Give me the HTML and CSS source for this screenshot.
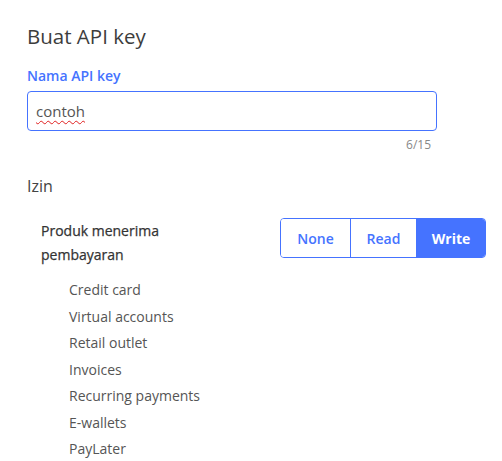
FILE: index.html
```html
<!DOCTYPE html>
<html lang="id">
<head>
<meta charset="utf-8">
<title>Buat API key</title>
<link rel="stylesheet" href="styles.css">
</head>
<body>
<div class="panel">
  <h1 class="title">Buat API key</h1>
  <label class="field-label">Nama API key</label>
  <div class="input" role="textbox"><span class="misspelled">contoh</span></div>
  <div class="counter">6/15</div>
  <h2 class="section">Izin</h2>
  <div class="perm-row">
    <div class="perm-name">Produk menerima<br>pembayaran</div>
    <div class="seg">
      <button class="seg-btn">None</button>
      <button class="seg-btn">Read</button>
      <button class="seg-btn active">Write</button>
    </div>
  </div>
  <ul class="products">
    <li>Credit card</li>
    <li>Virtual accounts</li>
    <li>Retail outlet</li>
    <li>Invoices</li>
    <li>Recurring payments</li>
    <li>E-wallets</li>
    <li>PayLater</li>
  </ul>
</div>
</body>
</html>
```
FILE: styles.css
```css
* { box-sizing: border-box; }
body {
  margin: 0;
  background: #fff;
  font-family: "Open Sans", "Noto Sans", sans-serif;
  color: #555;
}
.panel {
  padding: 22px 16px 0 27px;
}
.title {
  margin: 0;
  font-size: 20.5px;
  line-height: 28px;
  font-weight: 400;
  color: #3d3d3d;
}
.field-label {
  display: block;
  margin-top: 16px;
  font-size: 14px;
  line-height: 20px;
  font-weight: 600;
  color: #4573ff;
}
.input {
  margin-top: 5px;
  width: 410px;
  height: 40px;
  border: 1px solid #4573ff;
  border-radius: 4px;
  padding: 0 8px;
  display: flex;
  align-items: center;
  font-size: 15px;
  color: #555;
}
.misspelled {
  text-decoration: underline wavy #e02020;
  text-decoration-thickness: 1px;
  text-underline-offset: 3px;
}
.counter {
  width: 404px;
  text-align: right;
  font-size: 12px;
  line-height: 18px;
  margin-top: 5px;
  color: #888;
}
.section {
  margin: 20px 0 0;
  font-size: 16px;
  line-height: 24px;
  font-weight: 400;
  color: #444;
}
.perm-row {
  margin-top: 20px;
  display: flex;
  justify-content: space-between;
  align-items: flex-start;
  padding-left: 14px;
  width: 459px;
}
.perm-name {
  font-size: 14px;
  line-height: 24px;
  font-weight: 500;
  color: #333;
  padding-top: 1px;
  -webkit-text-stroke: 0.25px #333;
}
.seg {
  display: flex;
  border: 1px solid #4573ff;
  border-radius: 4px;
  overflow: hidden;
}
.seg-btn {
  height: 38px;
  border: 0;
  background: #fff;
  color: #4573ff;
  font-family: inherit;
  font-size: 14px;
  font-weight: 600;
  padding: 0;
  width: 69px;
}
.seg-btn + .seg-btn { border-left: 1px solid #4573ff; }
.seg-btn:nth-child(2) { width: 66px; }
.seg-btn.active { background: #4573ff; color: #fff; font-weight: 700; }
.products {
  list-style: none;
  margin: 10px 0 0;
  padding: 0 0 0 42px;
}
.products li {
  font-size: 14px;
  line-height: 26.5px;
  color: #555;
}
```
